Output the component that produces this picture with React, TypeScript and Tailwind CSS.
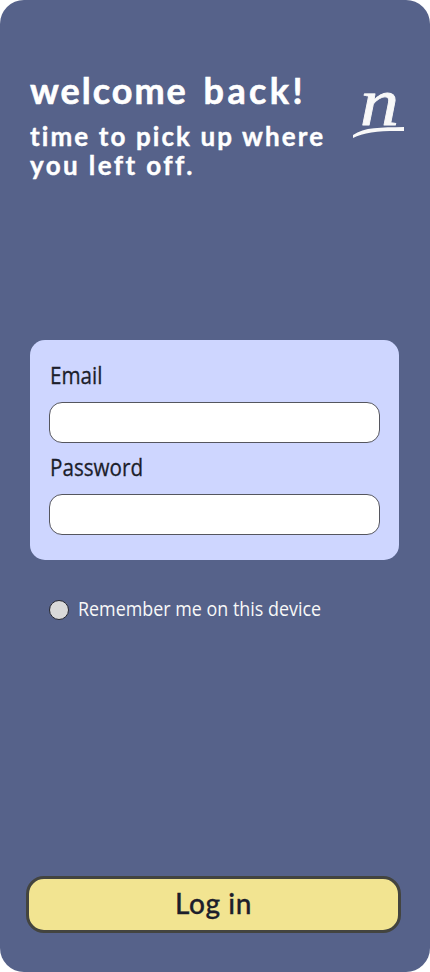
import React from "react";

function Logo() {
  return (
    <svg width="54" height="54" viewBox="0 0 54 54" className="mt-[88px] shrink-0 overflow-visible" role="img" aria-label="n">
      <text
        x="8"
        y="36.8"
        fill="#f8f8f8"
        stroke="#f8f8f8"
        strokeWidth="0.8"
        strokeLinejoin="round"
        textLength="39"
        lengthAdjust="spacingAndGlyphs"
        className="font-['Liberation_Serif',serif] text-[68px] leading-none italic"
      >
        n
      </text>
      <path d="M1 47 C12 39 29 39.5 52 39 V43 C30 42.5 12 44 1 50 Z" fill="#f8f8f8" />
    </svg>
  );
}

function Field({ label, type }: { label: string; type: string }) {
  return (
    <label className="block h-[92px]">
      <span className="block h-[41px] pl-px font-['Open_Sans',sans-serif] text-[24px] font-medium leading-[28px] text-[#1c1e2b] [-webkit-text-stroke:0.3px_#1c1e2b]">
        <span className="inline-block origin-left scale-x-[0.86]">{label}</span>
      </span>
      <input
        type={type}
        className="block h-[41px] w-[331px] rounded-[13px] border border-[#55565f] bg-white px-3 outline-none"
      />
    </label>
  );
}

export default function App() {
  return (
    <div className="bg-white">
      <main className="flex h-[972px] w-[430px] flex-col overflow-hidden rounded-[24px] bg-[#56628a]">
        <header className="flex h-[340px] pl-[30px]">
          <div className="w-[322px] shrink-0 pt-[69px] font-['Lato',sans-serif] font-bold text-white">
            <h1 className="whitespace-nowrap text-[36px] leading-[43px] tracking-[2px] [-webkit-text-stroke:0.6px_white]">
              welcome <span className="ml-[5px] tracking-[3.4px]">back!</span>
            </h1>
            <p className="mt-[10px] whitespace-nowrap text-[26px] leading-[29px] tracking-[2.1px] [-webkit-text-stroke:0.4px_white]">
              time to pick up where
              <br />
              <span className="tracking-[2.4px]">you left off.</span>
            </p>
          </div>
          <Logo />
        </header>
        <form className="flex grow flex-col">
          <section className="ml-[30px] h-[220px] w-[369px] rounded-[15px] bg-[#ced6ff] pl-[18.5px] pt-[20.5px]">
            <Field label="Email" type="email" />
            <Field label="Password" type="password" />
          </section>
          <label className="ml-[49px] mt-[35px] flex h-[30px] items-center">
            <input
              type="radio"
              className="size-5 appearance-none rounded-full border border-[#25262f] bg-[#d9d9d9]"
            />
            <span className="mb-[2px] ml-[9px] origin-left scale-x-[0.895] whitespace-nowrap font-['Open_Sans',sans-serif] text-[20px] leading-[28px] text-[#f8f8f8]">
              Remember me on this device
            </span>
          </label>
          <button
            type="button"
            className="mb-[39px] ml-[26px] mt-auto h-[57px] w-[375px] rounded-[18px] border-3 border-[#43443f] bg-[#f2e491] pb-1 font-['Lato',sans-serif] text-[28px] font-medium leading-8 tracking-[0.6px] text-[#1c1e2b] [-webkit-text-stroke:0.3px_#1c1e2b]"
          >
            Log in
          </button>
        </form>
      </main>
    </div>
  );
}
